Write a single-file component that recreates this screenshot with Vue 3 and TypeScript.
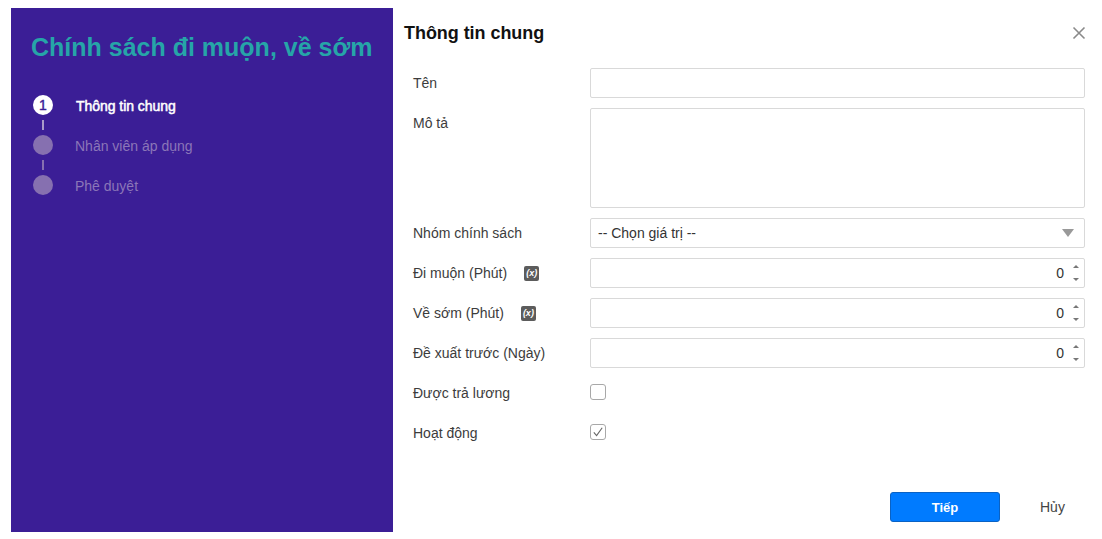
<script setup lang="ts">
const steps = [
  { n: '1', label: 'Thông tin chung', active: true },
  { n: '', label: 'Nhân viên áp dụng', active: false },
  { n: '', label: 'Phê duyệt', active: false },
]
const numbers = [
  { label: 'Đi muộn (Phút)', gap: 17 },
  { label: 'Về sớm (Phút)', gap: 17 },
  { label: 'Đề xuất trước (Ngày)', gap: 0 },
]
</script>

<template>
  <div class="dialog">
    <aside class="side">
      <h1 class="title">Chính sách đi muộn, về sớm</h1>
      <ul class="steps">
        <li v-for="(s, i) in steps" :key="s.label" class="step" :class="{ active: s.active }">
          <div class="marker">
            <span class="dot">{{ s.n }}</span>
            <span v-if="i < steps.length - 1" class="line"></span>
          </div>
          <span class="step-label">{{ s.label }}</span>
        </li>
      </ul>
    </aside>
    <main class="main">
      <header class="head">
        <h2 class="head-title">Thông tin chung</h2>
        <svg class="close" width="14" height="14" viewBox="0 0 14 14">
          <path d="M1.5 1.5L12.5 12.5M12.5 1.5L1.5 12.5" stroke="#8a8a8a" stroke-width="1.6" fill="none" />
        </svg>
      </header>
      <form class="form" @submit.prevent>
        <div class="row">
          <label class="lab">Tên</label>
          <div class="box"></div>
        </div>
        <div class="row tall">
          <label class="lab top">Mô tả</label>
          <div class="box"></div>
        </div>
        <div class="row">
          <label class="lab">Nhóm chính sách</label>
          <div class="box select">
            <span>-- Chọn giá trị --</span>
            <i class="caret"></i>
          </div>
        </div>
        <div v-for="n in numbers" :key="n.label" class="row">
          <label class="lab">
            {{ n.label }}
            <span v-if="n.gap" class="fx" :style="{ marginLeft: n.gap + 'px' }">(x)</span>
          </label>
          <div class="box number">
            <span class="val">0</span>
            <span class="spin"><i class="up"></i><i class="down"></i></span>
          </div>
        </div>
        <div class="row">
          <label class="lab">Được trả lương</label>
          <span class="check"></span>
        </div>
        <div class="row">
          <label class="lab">Hoạt động</label>
          <span class="check">
            <svg width="14" height="14" viewBox="0 0 14 14">
              <path d="M2.8 7.4L5.6 10.6L11.2 2.8" stroke="#666" stroke-width="1.1" fill="none" />
            </svg>
          </span>
        </div>
      </form>
      <footer class="foot">
        <button class="next" type="button">Tiếp</button>
        <button class="cancel" type="button">Hủy</button>
      </footer>
    </main>
  </div>
</template>

<style>
html, body { margin: 0; background: #fff; }
</style>

<style scoped>
.dialog {
  display: flex;
  width: 1102px;
  height: 539px;
  box-sizing: border-box;
  padding: 8px 0 7px 11px;
  font-family: "Liberation Sans", Arial, sans-serif;
  font-size: 14px;
  color: #333;
  background: #fff;
  overflow: hidden;
}
.side {
  width: 382px;
  flex: none;
  background: #3b1e96;
  box-sizing: border-box;
  padding: 23px 0 0 20px;
}
.title {
  margin: 0;
  font-size: 25px;
  line-height: 33px;
  font-weight: 700;
  color: #26a5a8;
  white-space: nowrap;
}
.steps { list-style: none; margin: 31px 0 0 2px; padding: 0; }
.step { display: flex; height: 40px; color: #8b76b8; }
.marker { flex: none; display: flex; flex-direction: column; align-items: center; width: 20px; }
.dot {
  width: 20px;
  height: 20px;
  flex: none;
  border-radius: 50%;
  background: #8670b0;
  color: #3b1e96;
  font-size: 14px;
  line-height: 20px;
  text-align: center;
}
.line { width: 2px; height: 10px; margin-top: 5px; background: #8670b0; }
.step-label { margin-left: 22px; line-height: 20px; padding-top: 1px; }
.active { color: #fff; }
.active .step-label { margin-left: 23px; -webkit-text-stroke: 0.5px #fff; letter-spacing: -0.05px; }
.active .dot { background: #fff; -webkit-text-stroke: 0.4px #3b1e96; }
.active .line { background: #a99bc9; }
.main { flex: 1; min-width: 0; display: flex; flex-direction: column; }
.head {
  display: flex;
  align-items: center;
  justify-content: space-between;
  height: 50px;
  padding: 0 16px 0 11px;
}
.head-title { margin: 0; font-size: 18px; font-weight: 700; color: #111; letter-spacing: -0.05px; }
.form { display: flex; flex-direction: column; gap: 10px; margin-top: 10px; padding: 0 17px 0 20px; }
.row { display: flex; align-items: center; height: 30px; }
.row.tall { height: 100px; align-items: flex-start; }
.lab { width: 177px; flex: none; color: #3c3c3c; display: flex; align-items: center; white-space: nowrap; }
.lab.top { padding-top: 7px; }
.box {
  flex: 1;
  height: 100%;
  box-sizing: border-box;
  border: 1px solid #d9d9d9;
  border-radius: 2px;
}
.select { display: flex; align-items: center; justify-content: space-between; padding: 0 10px 0 7px; }
.caret {
  width: 0;
  height: 0;
  margin-top: -1px;
  border-left: 6px solid transparent;
  border-right: 6px solid transparent;
  border-top: 8px solid #999;
}
.number { display: flex; align-items: center; justify-content: flex-end; padding-right: 4px; }
.val { margin-right: 7px; }
.spin { width: 9px; height: 100%; display: flex; flex-direction: column; justify-content: space-between; align-items: center; padding: 6px 0; box-sizing: border-box; }
.up, .down { width: 0; height: 0; border-left: 3px solid transparent; border-right: 3px solid transparent; }
.up { border-bottom: 3px solid #777; }
.down { border-top: 3px solid #777; }
.fx {
  display: inline-block;
  width: 15px;
  height: 15px;
  background: #5c5c5c;
  border-radius: 2px;
  color: #fff;
  font-size: 9px;
  font-weight: 700;
  font-style: italic;
  line-height: 15px;
  text-align: center;
}
.check {
  width: 16px;
  height: 16px;
  margin-top: -2px;
  box-sizing: border-box;
  border: 1px solid #a8a8a8;
  border-radius: 3px;
  display: flex;
  align-items: center;
  justify-content: center;
}
.foot { display: flex; justify-content: flex-end; margin-top: auto; padding: 0 17px 10px 0; }
.next {
  width: 110px;
  height: 30px;
  background: #007bff;
  border: 1px solid #0a62c4;
  border-radius: 3px;
  color: #fff;
  font: 700 13px "Liberation Sans", Arial, sans-serif;
  padding: 0;
}
.cancel {
  width: 85px;
  height: 30px;
  background: none;
  border: 0;
  color: #444;
  font: 14px "Liberation Sans", Arial, sans-serif;
  padding: 0 0 0 40px;
  text-align: left;
}
</style>
